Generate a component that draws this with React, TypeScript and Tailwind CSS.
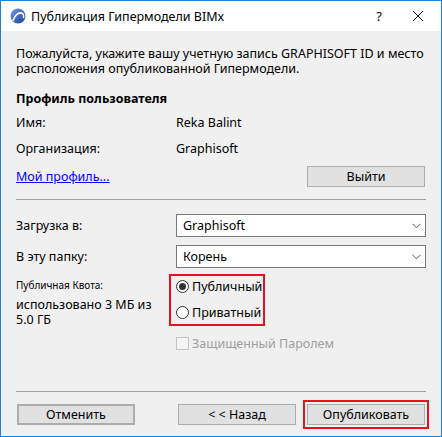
import React from "react";

function AppIcon() {
  return (
    <svg width="16" height="16" viewBox="0 0 16 16">
      <defs>
        <linearGradient id="g" x1="0" y1="0" x2="1" y2="1">
          <stop offset="0" stopColor="#6f9be8" />
          <stop offset="1" stopColor="#1d3f94" />
        </linearGradient>
      </defs>
      <circle cx="8" cy="8" r="7.5" fill="url(#g)" />
      <path d="M3 12.5 C5 7 9 3.5 12.5 5.5 C13.6 6.3 13.8 8 13.5 9.5" fill="none" stroke="#fff" strokeWidth="1.6" strokeLinecap="round" />
    </svg>
  );
}

function Chevron() {
  return (
    <svg width="9" height="6" viewBox="0 0 9 6">
      <path d="M0.5 0.8 L4.5 4.8 L8.5 0.8" fill="none" stroke="#555" strokeWidth="1" />
    </svg>
  );
}

function Combo({ value }: { value: string }) {
  return (
    <div className="h-[23px] w-[250px] bg-white border border-[#7a7a7a] flex items-center justify-between pl-[6px] pr-[4px]">
      <span>{value}</span>
      <Chevron />
    </div>
  );
}

function Radio({ checked, label }: { checked?: boolean; label: string }) {
  return (
    <div className="h-[20px] flex items-center gap-[3px]">
      <span className="w-[13px] h-[13px] rounded-full border border-[#333] bg-white flex items-center justify-center">
        {checked && <span className="w-[7px] h-[7px] rounded-full bg-[#333]" />}
      </span>
      <span>{label}</span>
    </div>
  );
}

function Btn({ label, className = "" }: { label: string; className?: string }) {
  return (
    <button className={`h-[21px] w-[118px] bg-[#e1e1e1] border border-[#adadad] text-[#000] flex items-center justify-center ${className}`}>
      {label}
    </button>
  );
}

export default function App() {
  return (
    <div className="w-[442px] h-[437px] border border-[#1883d7] bg-[#f0f0f0] flex flex-col text-[12.5px] leading-[15px] text-[#000] font-['Segoe_UI','Noto_Sans',sans-serif]">
      {/* title bar */}
      <div className="h-[30px] bg-white flex items-center shrink-0">
        <div className="ml-[9px] flex items-center">
          <AppIcon />
        </div>
        <span className="ml-[5px] text-[12.5px]">Публикация Гипермодели BIMx</span>
        <span className="ml-auto mr-[30px] text-[13px]">?</span>
        <svg className="mr-[17px]" width="12" height="12" viewBox="0 0 12 12">
          <path d="M1 1 L11 11 M11 1 L1 11" stroke="#111" strokeWidth="1" />
        </svg>
      </div>

      <div className="flex-1 flex flex-col px-[15px]">
        <p className="mt-[15px]">
          Пожалуйста, укажите вашу учетную запись GRAPHISOFT ID и место
          <br />
          расположения опубликованной Гипермодели.
        </p>

        <div className="mt-[15px] font-bold">Профиль пользователя</div>

        <div className="mt-[9px] flex">
          <span className="w-[160px]">Имя:</span>
          <span>Reka Balint</span>
        </div>
        <div className="mt-[11px] flex">
          <span className="w-[160px]">Организация:</span>
          <span>Graphisoft</span>
        </div>

        <div className="mt-[10px] flex items-center justify-between pr-[1px]">
          <a href="#" className="text-[#0000ff] underline">Мой профиль...</a>
          <Btn label="Выйти" />
        </div>

        <div className="mt-[12px] h-px bg-[#a0a0a0]" />

        <div className="mt-[14px] flex items-center">
          <span className="w-[160px]">Загрузка в:</span>
          <Combo value="Graphisoft" />
        </div>
        <div className="mt-[8px] flex items-center">
          <span className="w-[160px]">В эту папку:</span>
          <Combo value="Корень" />
        </div>

        <div className="mt-[6px] flex">
          <div className="w-[153px] flex flex-col">
            <span className="mt-[5px] text-[10px] leading-[12px]">Публичная Квота:</span>
            <span className="mt-[6px]">использовано 3 МБ из</span>
            <span>5.0 ГБ</span>
          </div>
          <div className="w-[96px] h-[52px] border-2 border-[#e81123] pl-[5px] flex flex-col gap-[6px]">
            <Radio checked label="Публичный" />
            <Radio label="Приватный" />
          </div>
        </div>

        <div className="mt-[9px] ml-[160px] flex items-center gap-[3px] text-[#a0a0a0]">
          <span className="w-[13px] h-[13px] border border-[#c4c4c4] bg-[#f4f4f4]" />
          <span>Защищенный Паролем</span>
        </div>

        <div className="mt-auto h-px bg-[#a0a0a0]" />

        <div className="mt-[12px] mb-[11px] flex items-center pr-[1px]">
          <Btn label="Отменить" className="ml-[1px] w-[117px] border-2 border-[#0078d7]" />
          <Btn label="< < Назад" className="ml-[43px]" />
          <Btn label="Опубликовать" className="ml-auto outline-2 outline-[#e81123] outline-offset-[2px]" />
        </div>
      </div>
    </div>
  );
}
